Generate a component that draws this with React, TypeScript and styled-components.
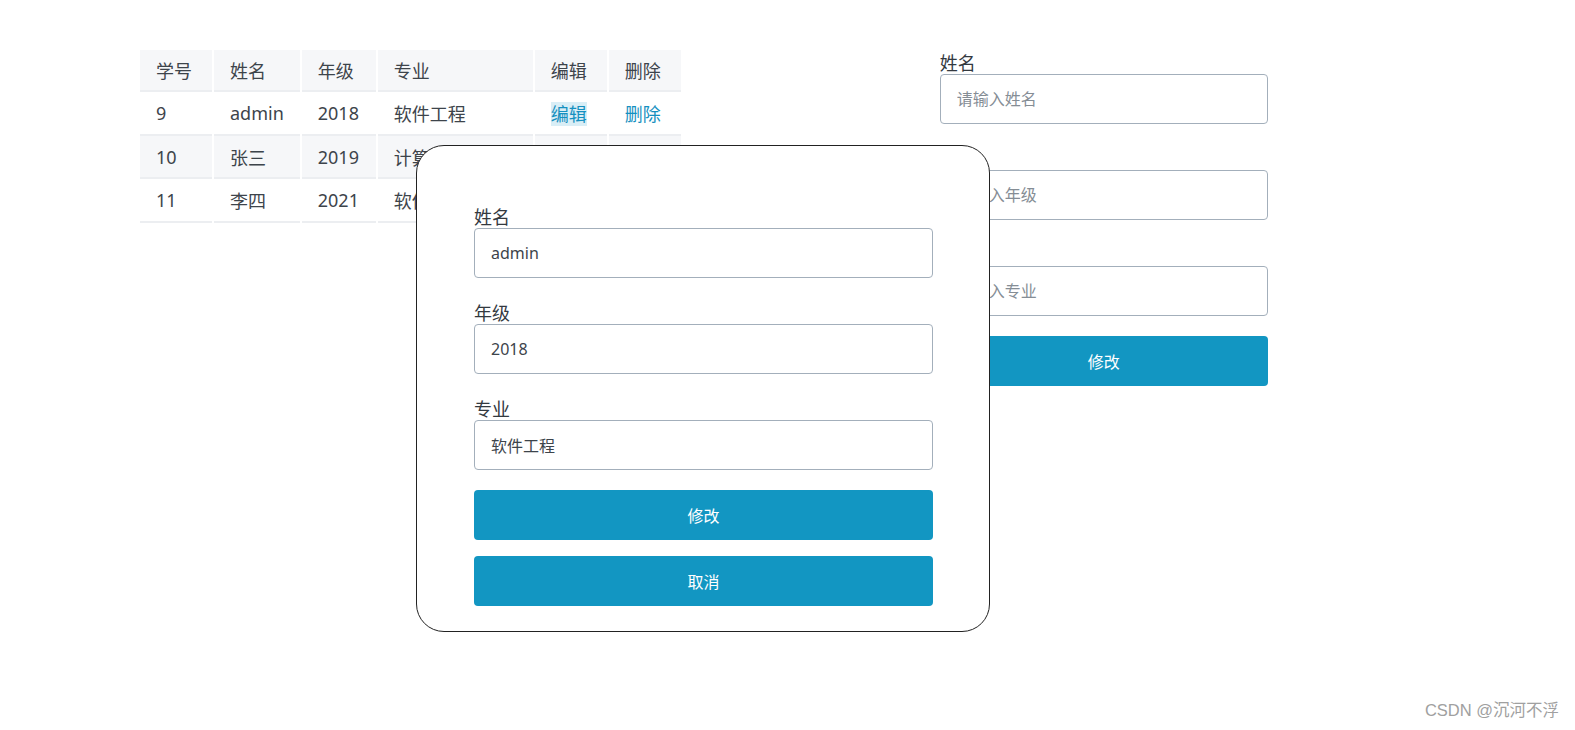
import React from 'react'
import styled, { createGlobalStyle } from 'styled-components'

const GlobalStyle = createGlobalStyle`
  * {
    box-sizing: border-box;
  }
  body {
    margin: 0;
    background: #fff;
    font-family: "Noto Sans", "Noto Sans CJK SC", sans-serif;
    color: #3d444b;
  }
`

const Page = styled.div`
  position: relative;
  width: 1575px;
  height: 730px;
  display: flex;
  align-items: flex-start;
  padding: 50px 0 0 138px;
`

const Table = styled.table`
  border-collapse: separate;
  border-spacing: 2px 0;
  font-size: 18px;
  color: #3d444b;
`

const Th = styled.th<{ $w: number }>`
  width: ${p => p.$w}px;
  height: 42px;
  padding: 0 16px;
  text-align: left;
  font-weight: 400;
  background: #f6f7f9;
  border-bottom: 2px solid #eceef1;
  white-space: nowrap;
`

const Tr = styled.tr<{ $striped?: boolean }>`
  background: ${p => (p.$striped ? '#f6f7f9' : '#fff')};
`

const Td = styled.td`
  height: 43.7px;
  padding: 0 16px;
  border-bottom: 2px solid #eceef1;
  white-space: nowrap;
`

const Link = styled.span<{ $active?: boolean }>`
  color: #1590c0;
  cursor: pointer;
  background: ${p => (p.$active ? '#d9eef6' : 'transparent')};
`

const SideForm = styled.form`
  width: 328px;
  margin-left: 257px;
  padding-top: 2px;
  display: flex;
  flex-direction: column;
`

const Group = styled.div<{ $last?: boolean }>`
  display: flex;
  flex-direction: column;
  margin-bottom: ${p => (p.$last ? '20px' : '24px')};
`

const Label = styled.label`
  font-size: 18px;
  line-height: 22px;
  height: 22px;
  color: #33393f;
`

const Input = styled.input`
  height: 50px;
  width: 100%;
  border: 1px solid #a3afbb;
  border-radius: 4px;
  padding: 0 16px;
  font-family: "Noto Sans", "Noto Sans CJK SC", sans-serif;
  font-size: 16px;
  color: #3d444b;
  background: #fff;
  outline: none;
  &::placeholder {
    color: #858d95;
  }
`

const Button = styled.button<{ $gap?: number }>`
  height: 50px;
  width: 100%;
  border: none;
  border-radius: 4px;
  background: #1296c2;
  color: #fff;
  font-family: "Noto Sans", "Noto Sans CJK SC", sans-serif;
  font-size: 16px;
  cursor: pointer;
  margin-top: ${p => p.$gap ?? 0}px;
`

const Modal = styled.div`
  position: absolute;
  left: 416px;
  top: 145px;
  width: 574px;
  height: 487px;
  background: #fff;
  border: 1px solid #222;
  border-radius: 28px;
  padding: 60px 56px 24px 57px;
  display: flex;
  flex-direction: column;
  z-index: 10;
`

const Watermark = styled.div`
  position: absolute;
  right: 16px;
  bottom: 9px;
  font-family: "Liberation Sans", "Noto Sans CJK SC", sans-serif;
  font-size: 16.5px;
  color: #a0a0a0;
`

const students = [
  { id: 9, name: 'admin', grade: 2018, major: '软件工程' },
  { id: 10, name: '张三', grade: 2019, major: '计算机科学' },
  { id: 11, name: '李四', grade: 2021, major: '软件工程' },
]

const fields = [
  { label: '姓名', placeholder: '请输入姓名', value: 'admin' },
  { label: '年级', placeholder: '请输入年级', value: '2018' },
  { label: '专业', placeholder: '请输入专业', value: '软件工程' },
]

const App = () => {
  return (
    <Page>
      <GlobalStyle />
      <Table>
        <thead>
          <tr>
            <Th $w={72}>学号</Th>
            <Th $w={85}>姓名</Th>
            <Th $w={74}>年级</Th>
            <Th $w={155}>专业</Th>
            <Th $w={72}>编辑</Th>
            <Th $w={72}>删除</Th>
          </tr>
        </thead>
        <tbody>
          {students.map((s, i) => (
            <Tr key={s.id} $striped={i % 2 === 1}>
              <Td>{s.id}</Td>
              <Td>{s.name}</Td>
              <Td>{s.grade}</Td>
              <Td>{s.major}</Td>
              <Td><Link $active={i === 0}>编辑</Link></Td>
              <Td><Link>删除</Link></Td>
            </Tr>
          ))}
        </tbody>
      </Table>

      <SideForm>
        {fields.map((f, i) => (
          <Group key={f.label} $last={i === fields.length - 1}>
            <Label>{f.label}</Label>
            <Input placeholder={f.placeholder} readOnly />
          </Group>
        ))}
        <Button type="button">修改</Button>
      </SideForm>

      <Modal>
        {fields.map((f, i) => (
          <Group key={f.label} $last={i === fields.length - 1}>
            <Label>{f.label}</Label>
            <Input defaultValue={f.value} />
          </Group>
        ))}
        <Button type="button">修改</Button>
        <Button type="button" $gap={16}>取消</Button>
      </Modal>

      <Watermark>CSDN @沉河不浮</Watermark>
    </Page>
  )
}

export default App
